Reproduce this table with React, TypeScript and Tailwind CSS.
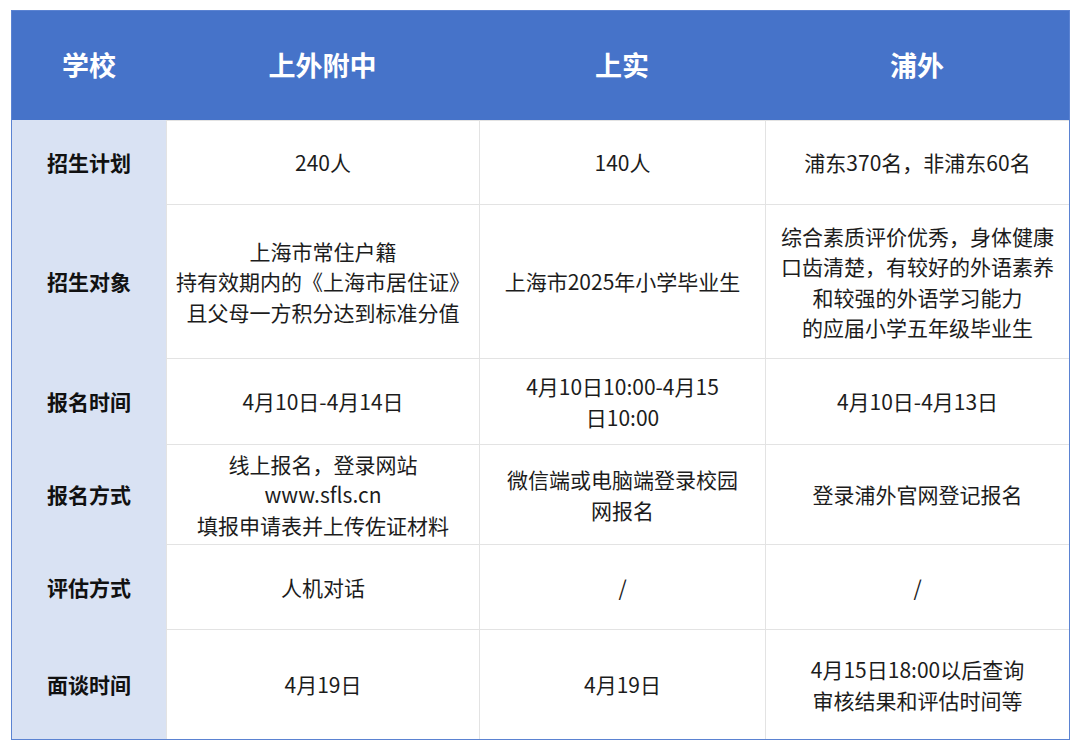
import React from "react";

const font = { fontFamily: '"Noto Sans CJK SC", "Noto Sans", sans-serif' };

const headers = ["学校", "上外附中", "上实", "浦外"];

const rows: { label: string; h: string; cells: string[][] }[] = [
  { label: "招生计划", h: "h-[85px]", cells: [["240人"], ["140人"], ["浦东370名，非浦东60名"]] },
  {
    label: "招生对象",
    h: "h-[154px]",
    cells: [
      ["上海市常住户籍", "持有效期内的《上海市居住证》", "且父母一方积分达到标准分值"],
      ["上海市2025年小学毕业生"],
      ["综合素质评价优秀，身体健康", "口齿清楚，有较好的外语素养", "和较强的外语学习能力", "的应届小学五年级毕业生"],
    ],
  },
  {
    label: "报名时间",
    h: "h-[86px]",
    cells: [["4月10日-4月14日"], ["4月10日10:00-4月15", "日10:00"], ["4月10日-4月13日"]],
  },
  {
    label: "报名方式",
    h: "h-[100px]",
    cells: [
      ["线上报名，登录网站", "www.sfls.cn", "填报申请表并上传佐证材料"],
      ["微信端或电脑端登录校园", "网报名"],
      ["登录浦外官网登记报名"],
    ],
  },
  { label: "评估方式", h: "h-[85px]", cells: [["人机对话"], ["/"], ["/"]] },
  {
    label: "面谈时间",
    h: "h-[109px]",
    cells: [["4月19日"], ["4月19日"], ["4月15日18:00以后查询", "审核结果和评估时间等"]],
  },
];

export default function App() {
  return (
    <div className="w-[1080px] h-[751px] bg-white pt-[10px] pl-[11px]" style={font}>
      <div className="w-[1059px] border border-[#5b83d2] grid grid-cols-[154px_313px_286px_304px]">
        {headers.map((h) => (
          <div
            key={h}
            className="h-[109px] bg-[#4673c9] flex items-center justify-center text-white text-[27px] font-bold"
          >
            {h}
          </div>
        ))}
        {rows.map((r, ri) => (
          <React.Fragment key={r.label}>
            <div
              className={`${r.h} bg-[#d9e2f3] flex items-center justify-center text-[21px] font-bold text-[#111]`}
            >
              {r.label}
            </div>
            {r.cells.map((lines, ci) => (
              <div
                key={ci}
                className={`${r.h} flex flex-col items-center justify-center text-[21px] leading-[30.5px] text-[#1c1c1c] border-l border-[#e3e3e3] ${
                  ri < rows.length - 1 ? "border-b" : ""
                } ${ri === 0 ? "border-t" : ""}`}
              >
                {lines.map((l) => (
                  <span key={l} className="whitespace-nowrap">{l}</span>
                ))}
              </div>
            ))}
          </React.Fragment>
        ))}
      </div>
    </div>
  );
}
